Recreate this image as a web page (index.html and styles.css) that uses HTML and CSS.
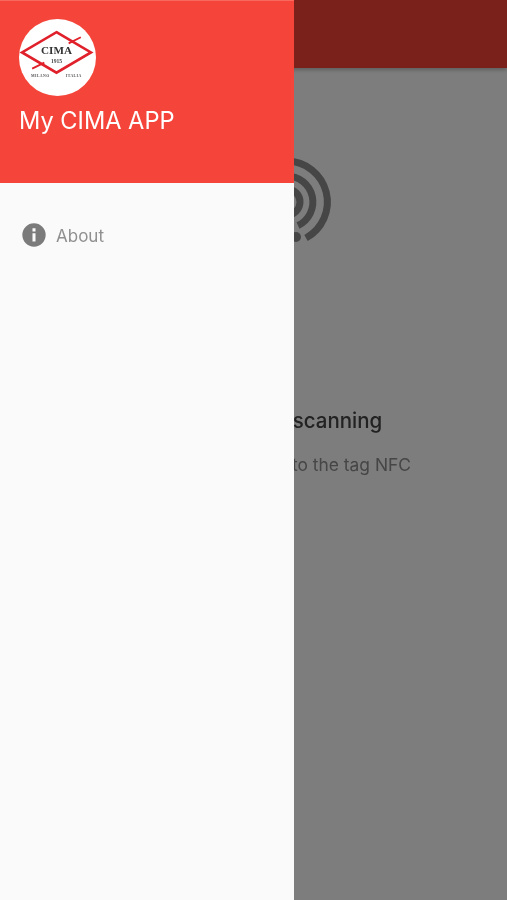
FILE: index.html
```html
<!DOCTYPE html>
<html lang="en">
<head>
  <meta charset="UTF-8" />
  <meta name="viewport" content="width=device-width, initial-scale=1" />
  <title>My CIMA APP</title>
  <link rel="stylesheet" href="styles.css">
</head>
<body>
  <!-- Page behind the drawer -->
  <div class="page">
    <header class="appbar"></header>
    <main class="scan">
      <svg class="nfc" viewBox="0 0 100 100" width="100" height="100" aria-hidden="true">
        <g fill="none" stroke="#8c8c8c" stroke-width="7">
          <path d="M37 13A41 41 0 0 1 56 90" />
          <path d="M37 28A26 26 0 0 1 48 77.5" />
          <path d="M37 41A13 13 0 0 1 37 67" />
        </g>
        <circle cx="46" cy="89" r="5" fill="#8c8c8c" />
      </svg>
      <h1 class="scan-title">Ready to start scanning</h1>
      <p class="scan-text">Move your device close to the tag NFC</p>
    </main>
  </div>
  <div class="scrim"></div>

  <!-- Drawer -->
  <aside class="drawer">
    <div class="drawer-head">
      <svg class="logo" viewBox="0 0 76 76" width="77" height="77" aria-hidden="true">
        <circle cx="38" cy="38" r="38" fill="#fff" />
        <path d="M37 13L71 33L37 53L3 33Z" fill="none" stroke="#e0202a" stroke-width="2.6" />
        <path d="M49 24L61 18M13 49L25 43" fill="none" stroke="#e0202a" stroke-width="1.8" />
        <text class="logo-name" x="37" y="35" text-anchor="middle">CIMA</text>
        <text class="logo-year" x="37" y="43" text-anchor="middle">1915</text>
        <text class="logo-city" x="21" y="57" text-anchor="middle">MILANO</text>
        <text class="logo-city" x="54" y="57" text-anchor="middle">ITALIA</text>
      </svg>
      <div class="drawer-title">My CIMA APP</div>
    </div>
    <nav class="menu">
      <a class="menu-item">
        <svg class="menu-icon" viewBox="0 0 24 24" width="28" height="28" aria-hidden="true">
          <path d="M12 2a10 10 0 1 0 0 20a10 10 0 0 0 0-20zM10.7 6.3h2.6v2.6h-2.6zM10.7 10.6h2.6v7h-2.6z" fill="#7b7b7b" fill-rule="evenodd" />
        </svg>
        <span class="menu-label">About</span>
      </a>
    </nav>
  </aside>
</body>
</html>
```

FILE: styles.css
```css
* {
  box-sizing: border-box; margin: 0; padding: 0;
}
html, body {
  height: 100%;
}
body {
  font-family: Inter, 'Open Sans', sans-serif;
  background: #fafafa;
  overflow: hidden;
  position: relative;
  filter: blur(0.5px);
}
.page {
  height: 900px;
  display: flex;
  flex-direction: column;
}
.appbar {
  height: 68px;
  flex: none;
  background: #f44336;
  box-shadow: 0 2px 4px rgba(0,0,0,0.25);
}
.scan {
  display: flex;
  flex-direction: column;
  align-items: center;
  padding-top: 80px;
}
.nfc {
  align-self: flex-start;
  margin-left: 250px;
  margin-bottom: 159px;
}
.scan-title {
  font-size: 20.5px;
  font-weight: 500;
  line-height: 28px;
  color: #444;
  white-space: nowrap;
  margin-left: 26px;
}
.scan-text {
  font-size: 17.4px;
  line-height: 24px;
  margin-top: 18px;
  margin-right: 4px;
  color: #8c8c8c;
  white-space: nowrap;
}
.scrim {
  position: absolute;
  inset: 0;
  background: rgba(0,0,0,0.5);
}
.drawer {
  position: absolute;
  top: 0;
  left: 0;
  bottom: 0;
  width: 294px;
  background: #fafafa;
}
.drawer-head {
  height: 183px;
  background: #f5453a;
  border-top: 1px solid #f7695e;
  padding: 18px 19px 0;
}
.logo {
  display: block;
}
.drawer-title {
  margin-top: 10px;
  color: #fff;
  font-size: 23.6px;
  line-height: 30px;
}
.logo-name {
  font-family: 'Liberation Serif', serif;
  font-weight: 700;
  font-size: 11px;
  fill: #333;
}
.logo-year {
  font-family: 'Liberation Serif', serif;
  font-weight: 700;
  font-size: 5.5px;
  fill: #444;
}
.logo-city {
  font-family: 'Liberation Serif', serif;
  font-size: 3.8px;
  font-weight: 700;
  letter-spacing: 0.4px;
  fill: #555;
}
.menu {
  padding-top: 38px;
}
.menu-item {
  display: flex;
  align-items: center;
  gap: 8px;
  padding-left: 20px;
  height: 28px;
  color: #8f8f8f;
  font-size: 17px;
}
.menu-label {
  padding-top: 1px;
}
```
